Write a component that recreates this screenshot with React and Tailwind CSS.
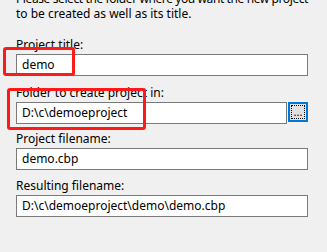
import React from "react";

function Field({ label, value, mt, button }) {
  return (
    <div className={mt}>
      <div className="h-[15px] leading-[15px] whitespace-nowrap">{label}</div>
      <div className="mt-[2px] flex">
        <div
          className={`h-[22px] border border-[#7a7a7a] bg-white pl-[5px] leading-[20px] whitespace-nowrap ${
            button ? "w-[271px]" : "w-[292px]"
          }`}
        >
          {value}
        </div>
        {button && (
          <div className="ml-[1px] w-[20px] h-[20px] bg-[#e1e1e1] border-2 border-[#0078d7] p-[1px]">
            <div className="w-full h-full border border-dotted border-black flex items-end justify-center leading-[10px] text-[11px] pb-[1px]">
              ...
            </div>
          </div>
        )}
      </div>
    </div>
  );
}

export default function App() {
  return (
    <div
      className="relative w-[327px] h-[252px] overflow-hidden bg-[#f0f0f0] text-[12px] text-black"
      style={{ fontFamily: '"Noto Sans", "Open Sans", sans-serif' }}
    >
      <div className="pl-[16px] -mt-[9px]">
        <div className="leading-[15px] whitespace-nowrap tracking-[-0.4px]">
          Please select the folder where you want the new project
        </div>
        <div className="leading-[15px] whitespace-nowrap">
          to be created as well as its title.
        </div>
        <Field label="Project title:" value="demo" mt="mt-[16px]" />
        <Field
          label="Folder to create project in:"
          value="D:\c\demoeproject"
          mt="mt-[9px]"
          button
        />
        <Field label="Project filename:" value="demo.cbp" mt="mt-[7px]" />
        <Field
          label="Resulting filename:"
          value="D:\c\demoeproject\demo\demo.cbp"
          mt="mt-[8px]"
        />
      </div>
      <div className="absolute left-[3px] top-[47px] w-[72px] h-[29px] border-[3px] border-[#ff1a1a] rounded-[3px]" />
      <div className="absolute left-[7px] top-[88px] w-[139px] h-[42px] border-[3px] border-[#ff1a1a] rounded-[3px]" />
    </div>
  );
}
